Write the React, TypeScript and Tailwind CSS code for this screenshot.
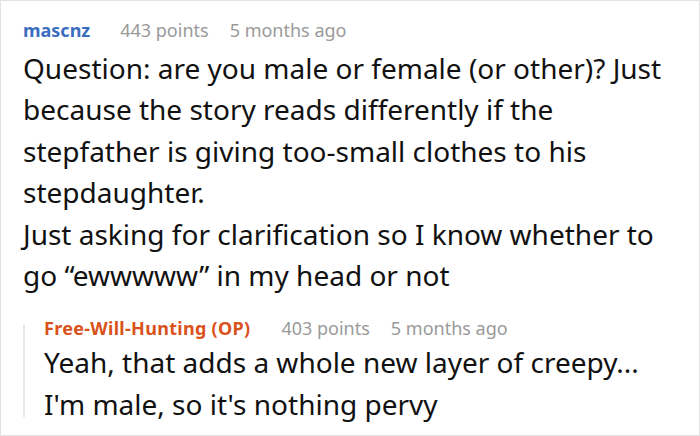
export default function App() {
  return (
    <div
      className="w-[700px] h-[436px] overflow-hidden border border-[#e2e2e2] bg-white pl-[22px] pt-[16.5px] text-[#111]"
      style={{ fontFamily: '"Noto Sans", "Open Sans", sans-serif' }}
    >
      <div className="flex items-baseline text-[18px] leading-[24px] whitespace-nowrap">
        <span className="font-bold text-[#3a6ec1]">mascnz</span>
        <span className="ml-[30px] text-[#9a9a9a]">443 points</span>
        <span className="ml-[21px] text-[#9a9a9a]">5 months ago</span>
      </div>
      <div className="mt-[6px] text-[28px] leading-[41.5px] whitespace-nowrap">
        <p>Question: are you male or female (or other)? Just</p>
        <p>because the story reads differently if the</p>
        <p>stepfather is giving too-small clothes to his</p>
        <p>stepdaughter.</p>
        <p>Just asking for clarification so I know whether to</p>
        <p>go “ewwwww” in my head or not</p>
      </div>

      <div className="mt-[19.5px] flex">
        <div className="mt-[9px] h-[92px] w-[2px] shrink-0 bg-[#e6e6e6]" />
        <div className="ml-[19px]">
          <div className="flex items-baseline text-[18px] leading-[24px] whitespace-nowrap">
            <span className="font-bold tracking-[0.3px] text-[#d9521b]">Free-Will-Hunting (OP)</span>
            <span className="ml-[31px] text-[#9a9a9a]">403 points</span>
            <span className="ml-[21px] text-[#9a9a9a]">5 months ago</span>
          </div>
          <div className="mt-[2px] text-[28px] leading-[41.5px] whitespace-nowrap">
            <p>Yeah, that adds a whole new layer of creepy...</p>
            <p>I'm male, so it's nothing pervy</p>
          </div>
        </div>
      </div>
    </div>
  );
}
